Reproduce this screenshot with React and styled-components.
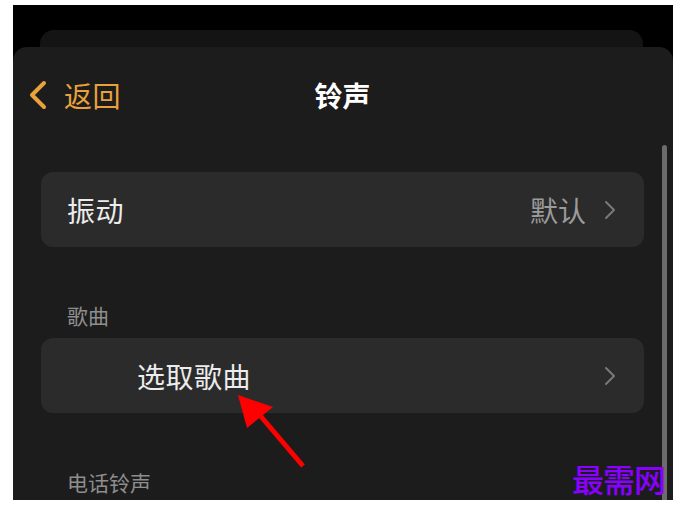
import React from 'react';
import styled, { createGlobalStyle } from 'styled-components';

const GlobalStyle = createGlobalStyle`
  body {
    margin: 0;
    background: #ffffff;
    font-family: 'Noto Sans CJK SC', 'Noto Sans', sans-serif;
  }
`;

const Frame = styled.div`
  position: relative;
  margin: 5px 0 0 13px;
  width: 660px;
  height: 495px;
  background: #000000;
  overflow: hidden;
  display: flex;
  flex-direction: column;
`;

const BackSheet = styled.div`
  margin: 25px 30px 0 27px;
  height: 17px;
  flex-shrink: 0;
  background: #141414;
  border-radius: 14px 14px 0 0;
`;

const Sheet = styled.div`
  position: relative;
  flex: 1;
  background: #1c1c1c;
  border-radius: 14px 14px 0 0;
  padding: 0 29px 0 28px;
`;

const NavBar = styled.div`
  position: relative;
  height: 96px;
  display: flex;
  align-items: center;
  justify-content: center;
`;

const BackButton = styled.div`
  position: absolute;
  left: -13px;
  top: 0;
  height: 96px;
  display: flex;
  align-items: center;
  gap: 16px;
  color: #e9a23b;
  font-size: 28px;
  letter-spacing: 0.5px;
`;

const Title = styled.div`
  color: #ffffff;
  font-size: 28px;
  font-weight: 700;
`;

const Card = styled.div`
  height: 75px;
  margin-top: ${p => p.$top}px;
  background: #2b2b2b;
  border-radius: 12px;
  display: flex;
  align-items: center;
  padding: 0 28px 0 ${p => p.$indent}px;
`;

const RowLabel = styled.div`
  flex: 1;
  color: #ececec;
  font-size: 28px;
  letter-spacing: 0.5px;
`;

const RowValue = styled.div`
  color: #9b9b9b;
  font-size: 28px;
  margin-right: 18px;
`;

const SectionLabel = styled.div`
  margin: ${p => p.$top}px 0 0 26px;
  height: 21px;
  line-height: 21px;
  color: #8e8e8e;
  font-size: 21px;
`;

const ScrollBar = styled.div`
  position: absolute;
  left: 649px;
  top: 98px;
  width: 5px;
  height: 420px;
  border-radius: 3px;
  background: #6c6c6c;
`;

const Watermark = styled.div`
  position: absolute;
  left: 559px;
  top: 453px;
  color: #8a00ff;
  font-family: 'Noto Sans CJK SC', serif;
  font-size: 32px;
  font-weight: 500;
  line-height: 40px;
  letter-spacing: -1px;
`;

const ArrowSvg = styled.svg`
  position: absolute;
  left: 0;
  top: 0;
  pointer-events: none;
`;

const Chevron = ({ color, w, h, sw }) => (
  <svg width={w} height={h} viewBox="0 0 12 20">
    <path d="M2 2 L10 10 L2 18" fill="none" stroke={color} strokeWidth={sw} strokeLinecap="round" strokeLinejoin="round" />
  </svg>
);

const BackChevron = () => (
  <svg width="20" height="30" viewBox="0 0 20 30">
    <path d="M16 3 L4 15 L16 27" fill="none" stroke="#e9a23b" strokeWidth="4" strokeLinecap="round" strokeLinejoin="round" />
  </svg>
);

export default function App() {
  return (
    <>
      <GlobalStyle />
      <Frame>
        <BackSheet />
        <Sheet>
          <NavBar>
            <BackButton>
              <BackChevron />
              <span>返回</span>
            </BackButton>
            <Title>铃声</Title>
          </NavBar>
          <Card $top={29} $indent={26}>
            <RowLabel>振动</RowLabel>
            <RowValue>默认</RowValue>
            <Chevron color="#7a7a7a" w={12} h={20} sw={2} />
          </Card>
          <SectionLabel $top={58}>歌曲</SectionLabel>
          <Card $top={12} $indent={96}>
            <RowLabel>选取歌曲</RowLabel>
            <Chevron color="#7a7a7a" w={12} h={20} sw={2} />
          </Card>
          <SectionLabel $top={59}>电话铃声</SectionLabel>
          <ScrollBar />
        </Sheet>
        <ArrowSvg width="660" height="495">
          <line x1="290" y1="461" x2="245" y2="408" stroke="#ff0000" strokeWidth="5" />
          <polygon points="225,390 260,402 234,423" fill="#ff0000" />
        </ArrowSvg>
        <Watermark>最需网</Watermark>
      </Frame>
    </>
  );
}
